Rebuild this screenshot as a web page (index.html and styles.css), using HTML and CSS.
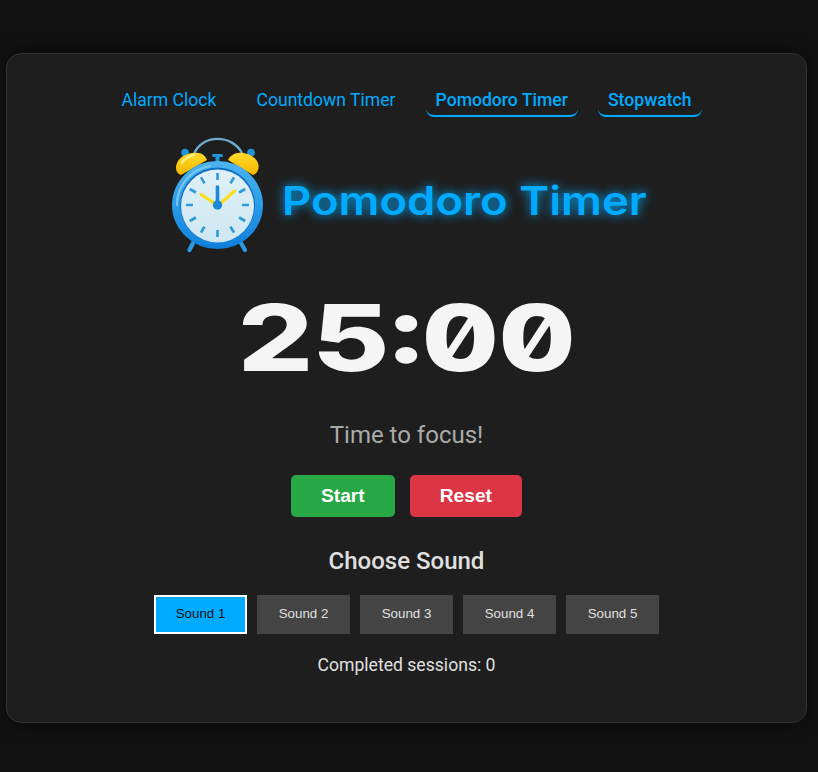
FILE: index.html
```html
<!DOCTYPE html>
<html lang="en">
<head>
<meta charset="utf-8">
<title>Pomodoro Timer</title>
<link rel="stylesheet" href="styles.css">
</head>
<body>
<main class="card">
  <nav class="nav">
    <a class="nav-link">Alarm Clock</a>
    <a class="nav-link">Countdown Timer</a>
    <a class="nav-link active">Pomodoro Timer</a>
    <a class="nav-link active">Stopwatch</a>
  </nav>
  <header class="heading">
    <svg class="clock" viewBox="17 6 100 120" aria-hidden="true">
      <defs>
        <linearGradient id="bell" x1="0" y1="0" x2="0" y2="1">
          <stop offset="0" stop-color="#ffd92a"/><stop offset="1" stop-color="#f5b800"/>
        </linearGradient>
        <linearGradient id="rim" x1="0" y1="0" x2="0" y2="1">
          <stop offset="0" stop-color="#4db4ee"/><stop offset="0.500" stop-color="#2a9ce8"/><stop offset="1" stop-color="#0f7edb"/>
        </linearGradient>
        <linearGradient id="face" x1="0" y1="0" x2="0" y2="1">
          <stop offset="0" stop-color="#dff0f7"/><stop offset="1" stop-color="#cfe7f2"/>
        </linearGradient>
      </defs>
      <path d="M44 24 C52 4 82 4 92 23" fill="none" stroke="#6fa9cc" stroke-width="2.400"/>
      <circle cx="35" cy="22.500" r="3.800" fill="#1f93d8"/>
      <circle cx="101" cy="22.500" r="3.800" fill="#1f93d8"/>
      <path d="M31 45 C25 43 25 36 28 31 C32 24 44 21 51 23.500 C54 25 56 27 57 30Z" fill="url(#bell)"/>
      <path d="M103 45 C109 43 110 36 107 31 C103 24 91 21 85 23.500 C82 25 79 27 78 30Z" fill="url(#bell)"/>
      <path d="M32 33 C35 28 39 26 44 25" fill="none" stroke="#ffec82" stroke-width="2.500" stroke-linecap="round"/>
      <rect x="62" y="24" width="11" height="3" rx="1.500" fill="#1f93d8"/>
      <rect x="65.500" y="26" width="4" height="8" fill="#1f93d8"/>
      <path d="M43 113 L39.500 120 M91 113 L95 120" stroke="#2a9be0" stroke-width="4.200" stroke-linecap="round"/>
      <ellipse cx="67.500" cy="75" rx="45.500" ry="44" fill="url(#rim)"/>
      <path d="M27 75 A40 39 0 0 1 60 36" fill="none" stroke="#7cc9f3" stroke-width="2" stroke-linecap="round"/>
      <circle cx="67.500" cy="75" r="37.500" fill="#0f6fc4"/>
      <circle cx="67.500" cy="76" r="36.500" fill="url(#face)"/>
      <g stroke="#2b9ad8" stroke-width="2.600">
        <path d="M67.500 43V50M67.500 100V107M36 75H43M92 75H99"/>
        <path d="M51 47.300L54.500 53.400M84 47.300L80.500 53.400M51 102.700L54.500 96.600M84 102.700L80.500 96.600"/>
        <path d="M39.800 59L45.900 62.500M95.200 59L89.100 62.500M39.800 91L45.900 87.500M95.200 91L89.100 87.500"/>
      </g>
      <path d="M51 64.500L64 73M84.500 61L71 73" stroke="#f9dc1c" stroke-width="3.200" stroke-linecap="round"/>
      <path d="M67.500 57V73" stroke="#1a8ad6" stroke-width="3.600" stroke-linecap="round"/>
      <circle cx="67.500" cy="75" r="4.700" fill="#1a8ad6"/>
    </svg>
    <h1 class="title">Pomodoro Timer</h1>
  </header>
  <div class="timer">25:00</div>
  <p class="status">Time to focus!</p>
  <div class="controls">
    <button class="control start">Start</button>
    <button class="control reset">Reset</button>
  </div>
  <h2 class="sound-title">Choose Sound</h2>
  <div class="sounds">
    <button class="sound selected">Sound 1</button>
    <button class="sound">Sound 2</button>
    <button class="sound">Sound 3</button>
    <button class="sound">Sound 4</button>
    <button class="sound">Sound 5</button>
  </div>
  <p class="sessions">Completed sessions: 0</p>
</main>
</body>
</html>
```
FILE: styles.css
```css
* { box-sizing: border-box; }
html, body { margin: 0; }
body {
  background: #121212;
  padding: 53px 11px 49px 6px;
  font-family: Roboto, sans-serif;
  color: #e0e0e0;
}
.card {
  background: #1e1e1e;
  border: 1px solid #333;
  border-radius: 15px;
  box-shadow: 0 0 20px rgba(0, 0, 0, 0.5);
  height: 670px;
  padding-top: 30px;
  display: flex;
  flex-direction: column;
  align-items: center;
}
.nav { display: flex; gap: 20px; }
.nav-link {
  padding: 6px 10px 4px;
  border-bottom: 2px solid transparent;
  border-radius: 8px;
  font-size: 17.6px;
  line-height: 21px;
  color: #00aaff;
}
.nav-link.active { border-bottom-color: #00aaff; font-weight: 500; }
.heading {
  display: flex;
  align-items: center;
  gap: 15px;
  margin-top: 19px;
}
.clock { width: 100px; height: 120px; display: block; }
.title {
  margin: 10px 0 0;
  width: 364px;
  white-space: nowrap;
  font-family: Inter, sans-serif;
  font-size: 40px;
  font-weight: 600;
  line-height: 48px;
  color: #00aaff;
  text-shadow: 0 0 10px #00aaff;
  transform: scaleX(1.135);
  transform-origin: left center;
}
.timer {
  margin-top: 32px;
  white-space: nowrap;
  font-family: Inter, sans-serif;
  font-feature-settings: "zero" 1, "tnum" 1;
  font-size: 92px;
  font-weight: 800;
  line-height: 100px;
  color: #f5f5f5;
  transform: scaleX(1.29);
}
.status {
  margin: 33px 0 0;
  font-size: 24px;
  line-height: 28px;
  color: #aaa;
}
.controls { display: flex; gap: 15px; margin-top: 26px; }
.control {
  height: 42px;
  padding: 0 30px;
  border: 0;
  border-radius: 5px;
  font-family: "Liberation Sans", Arial, sans-serif;
  font-size: 19.200px;
  font-weight: 700;
  color: #fff;
}
.start { background: #28a745; }
.reset { background: #dc3545; }
.sound-title {
  margin: 30px 0 0;
  font-size: 24px;
  font-weight: 500;
  line-height: 28px;
  color: #e0e0e0;
}
.sounds { display: flex; gap: 10px; margin-top: 20px; }
.sound {
  width: 93px;
  height: 39px;
  padding: 0 0 2px;
  border: 0;
  background: #444;
  color: #e0e0e0;
  font-family: "Liberation Sans", Arial, sans-serif;
  font-size: 13.333px;
}
.sound.selected { background: #00aaff; border: 2px solid #fff; color: #121212; }
.sessions {
  margin: 21px 0 0;
  font-size: 17.6px;
  line-height: 21px;
  color: #e0e0e0;
}
```
